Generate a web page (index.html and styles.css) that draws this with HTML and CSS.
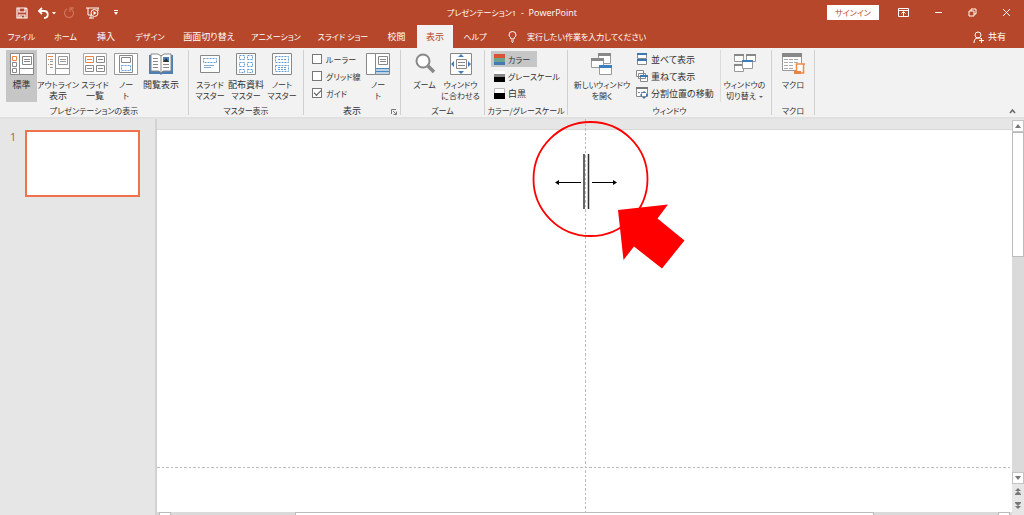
FILE: index.html
```html
<!DOCTYPE html>
<html lang="ja">
<head>
<meta charset="utf-8">
<title>プレゼンテーション1 - PowerPoint</title>
<link rel="stylesheet" href="styles.css">
</head>
<body>
<div class="app">
  <header class="titlebar">
    <div class="quick">
      <button aria-label="保存"><svg width="12" height="12" viewBox="0 0 12 12" fill="none" stroke="#fff" stroke-width="1.2"><path d="M1 1h9l1 1v9H1zM3 1v4h6V1M3 11V8h6v3M5 9v2"/></svg></button>
      <button class="undo" aria-label="元に戻す"><svg width="20" height="12" viewBox="0 0 20 12" fill="none" stroke="#fff" stroke-width="1.8"><path d="M5 1 2 4l3 3M2 4h5c5 0 5 7 0 7"/><path d="m15 5 2 2.500 2-2.500z" fill="#fff" stroke="none"/></svg></button>
      <button aria-label="やり直し"><svg width="12" height="12" viewBox="0 0 12 12" fill="none" stroke="#cf715a" stroke-width="1.300"><path d="M8 2a4.500 4.500 0 1 1-4 0M7 5V1h4"/></svg></button>
      <button class="show" aria-label="最初から"><svg width="14" height="12" viewBox="0 0 14 12" fill="none" stroke="#fff"><path d="M0 1h13M2 1v7h3M3 11h5M5 8v3M12 1v3"/><circle cx="8.500" cy="6" r="3.500"/><path d="m7.500 4 3 2-3 2z" fill="#fff" stroke="none"/></svg></button>
      <button class="more" aria-label="カスタマイズ"><svg width="6" height="6" viewBox="0 0 6 6" fill="#fff"><path d="M1 0h4v1H1zM1 2h4L3 5z"/></svg></button>
    </div>
    <div class="title"><span class="kana">プレゼンテーション1</span>&nbsp; -&nbsp; PowerPoint</div>
    <div class="window">
      <button class="signin kana">サインイン</button>
      <button aria-label="リボンの表示オプション"><svg width="11" height="9" viewBox="0 0 11 9" fill="none" stroke="#fff"><path d="M.5.500h10v8H.5zM.5 2.500h10M5.500 8V4M3.500 5.500l2-2 2 2"/></svg></button>
      <button aria-label="最小化"><svg width="9" height="9" viewBox="0 0 9 9" stroke="#fff"><path d="M1 4.500h7"/></svg></button>
      <button aria-label="元のサイズに戻す"><svg width="9" height="9" viewBox="0 0 9 9" fill="none" stroke="#fff"><path d="M1 3h5v5H1zM3 3V1h5v5H6"/></svg></button>
      <button aria-label="閉じる"><svg width="9" height="9" viewBox="0 0 9 9" stroke="#fff"><path d="m1 1 7 7M8 1 1 8"/></svg></button>
    </div>
  </header>
  <nav class="tabs">
    <button class="kana">ファイル</button><button class="kana">ホーム</button><button>挿入</button><button class="kana">デザイン</button><button class="wide">画面切り替え</button><button class="wide kana">アニメーション</button><button class="wide kana">スライド ショー</button><button class="short">校閲</button><button class="active">表示</button><button class="help kana">ヘルプ</button>
    <button class="tell kana"><svg width="9" height="12" viewBox="0 0 9 12" fill="none" stroke="#fff"><path d="M3 8C3 6 1 6 1 4a3.500 3.500 0 0 1 7 0c0 2-2 2-2 4zM3 10h3M4 11.500h1"/></svg>実行したい作業を入力してください</button>
    <button class="share"><svg width="12" height="12" viewBox="0 0 12 12" fill="none" stroke="#fff"><circle cx="5" cy="4" r="3"/><path d="M1 12c0-3 1-5 4-5 1 0 2 0 3 1M8.500 7v5M6 9.500h5"/></svg>共有</button>
  </nav>
  <section class="ribbon">
    <div class="group g-views">
      <div class="tools">
        <button class="big on w31"><svg width="24" height="22" viewBox="0 0 24 22" fill="#fff" stroke="#888"><path d="M.5.500h23v21H.5zM9.500.500v21M10 15.500h13.500"/><path d="M12.500 3.500h9v8h-9zM14 6.500h6M14 8.500h6"/><path d="M2.500 9.500h4v4h-4zM2.500 15.500h4v4h-4z"/><path d="M2.500 3.500h4v4h-4z" stroke="#e88440"/></svg><span>標準</span></button>
        <button class="big w42"><svg width="24" height="22" viewBox="0 0 24 22" fill="#fff" stroke="#999"><path d="M.5.500h23v21H.5zM9.500.500v21M10 15.500h13.500"/><path d="M12.500 3.500h9v8h-9zM14 6.500h6M14 8.500h6"/><path d="M2 3.500h5" stroke="#e88440"/><path d="M4 6.500h3M4 8.500h3M4 11.500h3M4 14.500h3"/><path d="M2 6.500h1M2 11.500h1" stroke="#e88440"/></svg><span><b class="kana">アウトライン</b><br>表示</span></button>
        <button class="big w32"><svg width="24" height="22" viewBox="0 0 24 22" fill="#fff" stroke="#888"><path d="M.5.500h23v21H.5z" stroke="#aaa"/><path d="M13.500 3.500h8v6h-8zM2.500 12.500h8v6h-8zM13.500 12.500h8v6h-8zM15 6.500h5M4 15.500h5M15 15.500h5"/><path d="M2.500 3.500h8v6h-8zM4 6.500h5" stroke="#e88440"/></svg><span><b class="kana">スライド</b><br>一覧</span></button>
        <button class="big w30"><svg width="24" height="22" viewBox="0 0 24 22" fill="#fff" stroke="#888"><path d="M.5.500h23v21H.5z" stroke="#999"/><path d="M5.500 2.500h13v17h-13zM7.500 4.500h9v5h-9z"/><path d="M7.500 12.500h9v5h-9z" stroke="#649bd0" stroke-dasharray="2 1"/></svg><span class="kana">ノー<br>ト</span></button>
        <button class="big w40"><svg width="24" height="22" viewBox="0 0 24 22"><path d="M0 2h24v19H13l-1 1-1-1H0z" fill="#4c80b2"/><path d="M2 1h7l3 2 3-2h7v17h-8l-2 2-2-2H2z" fill="#fff" stroke="#888"/><path d="M12 3v16M4 5.500h5M4 8.500h5M4 11.500h5M4 14.500h5M14 11.500h6M14 14.500h6" stroke="#888"/><path d="M14 4h6v5h-6z" fill="#4383c0"/><path d="m14 9 3-4 3 4z" fill="#333"/></svg><span>閲覧表示</span></button>
      </div><div class="caption kana">プレゼンテーションの表示</div>
    </div>
    <div class="group g-master">
      <div class="tools">
        <button class="big w36"><svg width="24" height="22" viewBox="0 0 24 22" fill="#fff" stroke="#888"><path d="M2.500 2.500h19v17h-19z"/><path d="M5.500 5.500h13v4h-13z" stroke="#649bd0" stroke-dasharray="2 1"/><path d="M6 12.500h10M6 14.500h7" stroke="#81add4"/></svg><span class="kana">スライド<br>マスター</span></button>
        <button class="big w36"><svg width="24" height="22" viewBox="0 0 24 22" fill="#fff" stroke="#888"><path d="M2.500.500h19v21h-19z"/><path d="M5.500 2.500h5v4h-5zM13.500 2.500h5v4h-5zM5.500 9.500h5v4h-5zM13.500 9.500h5v4h-5zM5.500 16.500h5v3h-5zM13.500 16.500h5v3h-5z" stroke="#649bd0" stroke-dasharray="2 1"/></svg><span>配布資料<br><b class="kana">マスター</b></span></button>
        <button class="big w36"><svg width="24" height="22" viewBox="0 0 24 22" fill="#fff" stroke="#888"><path d="M2.500.500h19v21h-19z"/><path d="M5.500 3.500h13v6h-13zM5.500 12.500h13v6h-13zM8 6.500h8M8 14.500h8M8 16.500h8" stroke="#649bd0" stroke-dasharray="2 1"/></svg><span class="kana">ノート<br>マスター</span></button>
      </div><div class="caption kana">マスター表示</div>
    </div>
    <div class="group g-show">
      <div class="tools">
        <div class="rows">
          <label class="kana"><input type="checkbox">ルーラー</label>
          <label class="kana"><input type="checkbox">グリッド線</label>
          <label class="kana"><input type="checkbox" checked>ガイド</label>
        </div>
        <button class="big w32"><svg width="24" height="22" viewBox="0 0 24 22" fill="#fff" stroke="#888"><path d="M.5.500h23v21H.5zM9.500.500v21"/><path d="M12.500 3.500h9v8h-9zM14 6.500h6M14 8.500h6"/><path d="M10 15h13v6H10z" fill="#b9d2e8" stroke="none"/><path d="M10 15.500h13M10 18.500h13" stroke="#4c88bd"/></svg><span class="kana">ノー<br>ト</span></button>
      </div><div class="caption">表示</div>
      <button class="launcher" aria-label="グリッドとガイド"><svg width="6" height="6" viewBox="0 0 6 6" fill="none" stroke="#777"><path d="M.5 5V.5H5M2 2l3 3M5.500 2.500v3h-3"/></svg></button>
    </div>
    <div class="group g-zoom">
      <div class="tools">
        <button class="big w36"><svg width="24" height="22" viewBox="0 0 24 22"><circle cx="10" cy="8" r="6.500" fill="#fff" stroke="#888" stroke-width="2"/><path d="m15 13 6 6" stroke="#888" stroke-width="3.500"/></svg><span class="kana">ズーム</span></button>
        <button class="big w36"><svg width="24" height="22" viewBox="0 0 24 22" fill="#fff" stroke="#888"><path d="M1.500.500h21v21h-21zM7.500 6.500h10v9h-10zM9 9.500h7M9 12.500h7"/><path d="m12 1 3 3H9zM12 21l3-3H9zM2 11l3-3v6zM22 11l-3-3v6z" fill="#3f7fbd" stroke="none"/></svg><span class="kana">ウィンドウ<br>に合わせる</span></button>
      </div><div class="caption kana">ズーム</div>
    </div>
    <div class="group g-color">
      <div class="tools"><div class="rows">
        <button class="small on kana"><svg width="11" height="11" viewBox="0 0 11 11"><path d="M0 0h11v4H0z" fill="#d65432"/><path d="M0 4h11v4H0z" fill="#6aa28d"/><path d="M0 8h11v3H0z" fill="#427ab4"/></svg>カラー</button>
        <button class="small kana"><svg width="11" height="11" viewBox="0 0 11 11"><path d="M0 0h11v4H0z" fill="#fff"/><path d="M0 3h11v3H0z" fill="#888"/><path d="M0 6h11v5H0z"/></svg>グレースケール</button>
        <button class="small"><svg width="11" height="11" viewBox="0 0 11 11"><path d="M0 0h11v6H0z" fill="#fff"/><path d="M.5 5V.5h10V5" fill="none" stroke="#bbb"/><path d="M0 5h11v6H0z"/></svg>白黒</button>
      </div></div><div class="caption kana">カラー/グレースケール</div>
    </div>
    <div class="group g-window">
      <div class="tools">
        <button class="big w60"><svg width="24" height="22" viewBox="0 0 24 22" fill="#fff" stroke="#999"><path d="M8.500.500h12v10h-12z"/><path d="M8 0h13v3H8z" fill="#888" stroke="none"/><path d="M1.500 5.500h12v9h-12z"/><path d="M1 5h13v3H1z" fill="#888" stroke="none"/><path d="M9.500 12.500h12v9h-12z"/><path d="M9 12h13v3H9z" fill="#3f7fbd" stroke="none"/></svg><span class="kana">新しいウィンドウ<br>を開く</span></button>
        <div class="rows win-rows">
          <button class="small"><svg width="12" height="12" viewBox="0 0 12 12" fill="#fff" stroke="#888"><path d="M1.500.500h9v5h-9zM1.500 6.500h9v5h-9z"/><path d="M1 0h10v2H1zM1 6h10v2H1z" fill="#3b78b3" stroke="none"/></svg>並べて表示</button>
          <button class="small"><svg width="12" height="12" viewBox="0 0 12 12" fill="#fff" stroke="#888"><path d="M.5.500h7v6h-7zM2.500 3.500h7v5h-7zM4.500 5.500h7v6h-7z"/><path d="M4 5h8v2H4z" fill="#3b78b3" stroke="none"/></svg>重ねて表示</button>
          <button class="small"><svg width="12" height="12" viewBox="0 0 12 12" fill="#fff" stroke="#888"><path d="M.5.500h11v9H.5z"/><path d="M0 0h12v2H0z" fill="#777" stroke="none"/><path d="M2 5.500h8" stroke-dasharray="2 1"/><path d="m8 4 2 2H6zM8 12l2-2H6zM4 8l2-2v4zM12 8l-2-2v4z" fill="#3b78b3" stroke="none"/></svg>分割位置の移動</button>
        </div>
        <button class="big w48 switch"><svg width="24" height="22" viewBox="0 0 24 22" fill="#fff" stroke="#999"><path d="M1.500 1.500h9v7h-9zM13.500 1.500h9v7h-9zM1.500 11.500h9v7h-9z"/><path d="M1 1h10v2H1zM13 1h10v2H13zM1 11h10v2H1z" fill="#888" stroke="none"/><path d="M9.500 7.500h10v8h-10z"/><path d="M9 7h11v2H9z" fill="#3f7fbd" stroke="none"/></svg><span class="kana">ウィンドウの<br>切り替え<i class="caret"></i></span></button>
      </div><div class="caption kana">ウィンドウ</div>
    </div>
    <div class="group g-macro">
      <div class="tools"><button class="big w40"><svg width="24" height="22" viewBox="0 0 24 22" fill="#fff" stroke="#999"><path d="M1.500.500h19v17h-19z"/><path d="M1 0h20v4H1z" fill="#888" stroke="none"/><path d="M3 6.500h15M3 9.500h15M3 12.500h10M3 15.500h10" stroke="#aaa" stroke-dasharray="4 1"/><path d="M15.500 19v-8H24M22.500 11v9h-9" stroke="#ee8a42" stroke-width="1.500"/><path d="M13 18h7v3h-7z" fill="#e8843d" stroke="none"/></svg><span class="kana">マクロ</span></button></div><div class="caption kana">マクロ</div>
    </div>
    <button class="collapse" aria-label="リボンを折りたたむ"><svg width="7" height="5" viewBox="0 0 7 5" fill="none" stroke="#666" stroke-width="1.500"><path d="m1 4 2.500-3L6 4"/></svg></button>
  </section>
  <main class="work">
    <aside class="slides"><span class="num">1</span><button class="thumb" aria-label="スライド 1"></button></aside>
    <div class="editor">
      <div class="canvas">
        <div class="slide"></div>
        <div class="guide-h"></div>
        <div class="guide-v"></div>
        <svg class="marks" width="170" height="154" viewBox="0 0 170 154">
          <path d="M54 35v55M58.500 35v55" stroke="#333" stroke-width="1.500"/>
          <path d="M27 63.500h24M62 63.500h24" stroke="#000" stroke-width="1.200"/>
          <path d="m25 63.500 4-2.500v5zM87 63.500 83 61v5z"/>
          <circle cx="60.500" cy="60" r="57" fill="none" stroke="#f00" stroke-width="1.800"/>
          <path d="m88 91 50-5.500-10.500 14 27 22-22.500 28-28-22-10.500 13.500z" fill="#f00"/>
        </svg>
      </div>
      <div class="hscroll"><i class="hbtn"></i><i class="htrack"></i><i class="hthumb"></i><i class="htrack"></i><i class="hbtn"></i></div>
    </div>
    <div class="vscroll">
      <button class="vbtn" aria-label="上へ"><svg width="6" height="4" viewBox="0 0 6 4" fill="#777"><path d="M0 4 3 0l3 4z"/></svg></button>
      <div class="vthumb"></div><div class="vtrack"></div>
      <button class="vbtn" aria-label="下へ"><svg width="6" height="4" viewBox="0 0 6 4" fill="#777"><path d="M0 0h6L3 4z"/></svg></button>
      <button class="page" aria-label="前のスライド"><svg width="6" height="7" viewBox="0 0 6 7" fill="#777"><path d="m3 0 3 3H0zM3 3l3 3H0zM0 6h6v1H0z"/></svg></button>
      <button class="page" aria-label="次のスライド"><svg width="6" height="7" viewBox="0 0 6 7" fill="#777"><path d="M0 0h6v1H0zM0 1h6L3 4zM0 4h6L3 7z"/></svg></button>
    </div>
  </main>
</div>
</body>
</html>
```

FILE: styles.css
```css
* { box-sizing: border-box; }
body {
  margin: 0;
  font: 9px/11px "Noto Sans CJK JP", sans-serif;
  font-feature-settings: "palt";
  color: #333;
}
button { font: inherit; font-feature-settings: inherit; color: inherit; background: none; border: 0; padding: 0; white-space: nowrap; }
svg { display: block; flex: none; }
.kana { font-size: 8px; font-weight: normal; }
.app { height: 100vh; display: flex; flex-direction: column; overflow: hidden; background: #e6e6e6; }

.titlebar { height: 25px; flex: none; display: grid; grid-template-columns: 1fr auto 1fr; align-items: center; background: #b7472a; color: #fff; }
.quick { display: flex; align-items: center; padding-left: 16px; gap: 9px; }
.undo { margin-right: -3px; }
.show { margin-left: 2px; }
.more { margin-left: 4px; }
.title { font-size: 9px; font-family: "Open Sans", "Noto Sans CJK JP", sans-serif; }
.window { display: flex; align-items: center; justify-content: flex-end; gap: 25px; padding-right: 13px; }
.signin { width: 52px; height: 15px; margin-right: -6px; background: #fff; color: #b7472a; }

.tabs { height: 23px; flex: none; display: flex; align-items: stretch; background: #b7472a; color: #fff; }
.tabs button { width: 43px; }
.tabs button:nth-child(2) { width: 45px; }
.tabs button:nth-child(3) { width: 36px; }
.tabs button:nth-child(4) { width: 52px; }
.tabs .wide { width: 66px; }
.tabs .wide:nth-child(6) { width: 68px; }
.tabs .short { width: 41px; }
.tabs .active { width: 36px; background: #f2f2f2; color: #b7472a; }
.tabs .help { width: 44px; margin-right: 11px; }
.tabs .tell, .tabs .share { width: auto; display: flex; align-items: center; gap: 10px; }
.tabs .share { gap: 3px; margin-left: auto; padding-right: 18px; }

.ribbon { height: 71px; flex: none; display: flex; padding: 2px 0; background: #f2f2f2; border-bottom: 2px solid #e1e1e1; }
.group { position: relative; display: flex; flex-direction: column; flex: none; border-right: 1px solid #d0d0d0; }
.g-views { width: 189px; }
.g-master { width: 115px; }
.g-show { width: 97px; }
.g-zoom { width: 84px; }
.g-color { width: 83px; }
.g-window { width: 204px; }
.g-macro { width: 43px; }
.tools { height: 52px; flex: none; display: flex; justify-content: center; align-items: stretch; }
.caption { text-align: center; line-height: 18px; white-space: nowrap; }
.big { display: flex; flex-direction: column; align-items: center; padding-top: 3px; flex: none; }
.big span { margin-top: 4px; }
.on { background: #c6c6c6; }
.w30 { width: 30px; }
.w31 { width: 31px; }
.w32 { width: 32px; }
.w36 { width: 36px; }
.w40 { width: 40px; }
.w42 { width: 42px; }
.w48 { width: 48px; }
.w60 { width: 60px; }
.g-views .tools { justify-content: flex-start; padding-left: 6px; }
.rows { display: flex; flex-direction: column; gap: 1px; padding-top: 1px; }
.rows label, .small { height: 16px; display: flex; align-items: center; gap: 4px; white-space: nowrap; }
.small { padding: 0 4px 0 3px; gap: 3px; align-self: flex-start; }
.g-show .tools { justify-content: flex-start; padding-left: 8px; }
.g-show .rows { width: 50px; }
.rows input { appearance: none; width: 10px; height: 10px; margin: 0; flex: none; display: grid; place-items: center; background: #fff; border: 1px solid #777; }
.rows input:checked::after { content: ""; width: 6px; height: 3px; margin-bottom: 2px; border: solid #555; border-width: 0 0 1px 1px; transform: rotate(-45deg); }
.g-color .tools { justify-content: flex-start; padding-left: 6px; }
.g-color .on { padding-right: 7px; }
.g-window .tools { justify-content: space-between; padding-right: 3px; }
.g-window .big:first-child { margin-left: 4px; }
.win-rows { width: 86px; }
.switch { border-left: 1px solid #dcdcdc; }
.caret { display: inline-block; margin-left: 3px; vertical-align: middle; border: 2px solid transparent; border-top-color: #666; border-bottom: 0; }
.launcher { position: absolute; right: 3px; bottom: 0; }
.collapse { margin-left: auto; align-self: flex-end; padding: 0 8px 1px 0; }

.work { flex: 1; min-height: 0; display: flex; }
.slides { width: 157px; flex: none; display: flex; align-items: flex-start; gap: 9px; padding: 11px 0 0 10px; border-right: 2px solid #d2d2d2; }
.num { width: 6px; font: 11px/13px "Open Sans", sans-serif; color: #d35230; }
.thumb { width: 115px; height: 67px; background: #fff; border: 2px solid #f0714e; }
.editor { flex: 1; display: flex; flex-direction: column; min-width: 0; }
.canvas { position: relative; flex: 1; display: flex; padding-top: 10px; }
.slide { flex: 1; background: #fff; border-top: 1px solid #d8d8d8; }
.guide-h { position: absolute; left: 0; right: 0; bottom: 44px; height: 1px; background: repeating-linear-gradient(90deg, #bbb 0 3px, transparent 3px 5px, #bbb 5px 7px, transparent 7px 9px); }
.guide-v { position: absolute; top: 0; bottom: 0; left: 50%; width: 1px; background: repeating-linear-gradient(#bbb 0 3px, transparent 3px 5px, #bbb 5px 7px, transparent 7px 9px); }
.marks { position: absolute; top: 0; left: 50%; margin-left: -55px; }
.hscroll { height: 3px; flex: none; display: flex; padding: 0 2px; background: #dadada; }
.hbtn { width: 12px; background: #fff; border: 1px solid #bbb; border-bottom: 0; }
.hthumb { flex: 579; background: #fff; border: 1px solid #bbb; border-bottom: 0; }
.htrack { flex: 125; }
.vscroll { width: 12px; flex: none; display: flex; flex-direction: column; padding: 1px 0 3px; background: #e6e6e6; }
.vbtn { height: 12px; display: grid; place-items: center; background: #fff; border: 1px solid #c4c4c4; }
.vthumb { flex: 124; background: #fff; border: 1px solid #bbb; }
.vtrack { flex: 218; background: #dadada; }
.page { height: 14px; display: grid; place-items: center; }
```
